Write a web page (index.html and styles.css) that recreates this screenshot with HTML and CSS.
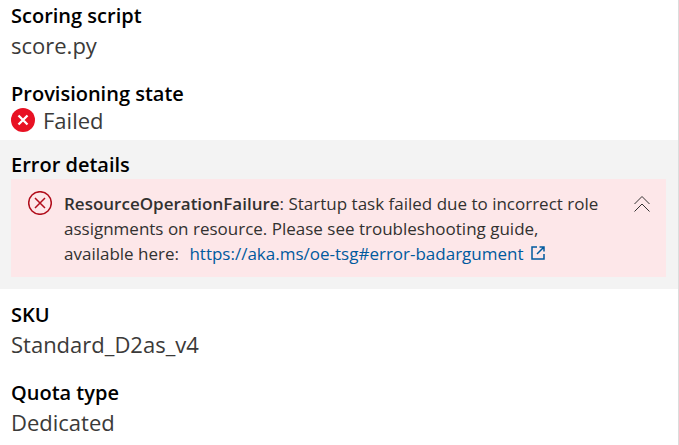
FILE: index.html
```html
<!DOCTYPE html>
<html lang="en">
<head>
<meta charset="utf-8">
<title>Deployment details</title>
<link rel="stylesheet" href="styles.css">
</head>
<body>
<main class="panel">
  <dl class="details">
    <div class="item">
      <dt class="label">Scoring script</dt>
      <dd class="value">score.py</dd>
    </div>
    <div class="item item-status">
      <dt class="label">Provisioning state</dt>
      <dd class="value status">
        <svg class="status-icon" viewBox="0 0 24 24" aria-hidden="true"><circle cx="12" cy="12" r="12" fill="#e81123"/><path d="M7.500 7.500l9 9M16.500 7.500l-9 9" stroke="#fff" stroke-width="2.300"/></svg>
        Failed
      </dd>
    </div>
    <div class="item item-error">
      <dt class="label">Error details</dt>
      <dd class="message">
        <svg class="message-icon" viewBox="0 0 24 24" aria-hidden="true"><circle cx="12" cy="12" r="11.300"/><path d="M7 7l10 10M17 7L7 17"/></svg>
        <p class="message-text"><strong>ResourceOperationFailure</strong>: Startup task failed due to incorrect role assignments on resource. Please see troubleshooting guide, available here: <a class="link" href="https://aka.ms/oe-tsg#error-badargument">https://aka.ms/oe-tsg#error-badargument<svg class="link-icon" viewBox="0 0 14 14" aria-hidden="true"><path d="M6 1H1v12h12V8M8.500 1H13v4.500M13 1L6 8"/></svg></a></p>
        <button class="collapse" type="button" aria-label="Collapse message"><svg class="collapse-icon" viewBox="0 0 16 16" aria-hidden="true"><path d="M.5 8L8 .5 15.500 8M.5 15.500L8 8l7.500 7.500"/></svg></button>
      </dd>
    </div>
    <div class="item">
      <dt class="label">SKU</dt>
      <dd class="value">Standard_D2as_v4</dd>
    </div>
    <div class="item">
      <dt class="label">Quota type</dt>
      <dd class="value">Dedicated</dd>
    </div>
  </dl>
</main>
</body>
</html>
```

FILE: styles.css
```css
* {
  box-sizing: border-box;
}

body {
  margin: 0;
  background: #fff;
  color: #323130;
  font-family: "Segoe UI", "Open Sans", "Noto Sans", sans-serif;
}

.panel {
  min-height: 100vh;
  padding-top: 1px;
  border-right: 1px solid #dcdcdc;
}

.details {
  margin: 0;
}

.item {
  padding: 0 12px 19px 11px;
}

.item:last-child {
  padding-bottom: 0;
}

.label {
  color: #000;
  font-size: 20px;
  font-weight: 600;
  line-height: 29px;
}

.value {
  margin: 0;
  color: #3b3a39;
  font-size: 22px;
  line-height: 30px;
}

.item-status {
  padding-bottom: 8px;
}

.status {
  display: flex;
  align-items: center;
  gap: 8px;
  line-height: 24px;
}

.status-icon {
  width: 24px;
  height: 24px;
}

.item-error {
  margin-bottom: 11px;
  padding-top: 10px;
  padding-bottom: 12px;
  background: #f3f3f3;
}

.message {
  display: flex;
  align-items: flex-start;
  gap: 12px;
  margin: 0;
  padding: 12px 16px 11px 17px;
  background: #fde7e9;
}

.message-icon {
  flex: none;
  width: 24px;
  height: 24px;
  fill: none;
  stroke: #b10e1c;
  stroke-width: 1.5;
}

.message-text {
  flex: 1;
  margin: 0;
  padding-right: 16px;
  font-size: 17px;
  line-height: 25px;
}

.message-text strong {
  font-weight: 600;
}

.link {
  margin-left: 6px;
  color: #005a9e;
  text-decoration: none;
}

.link-icon {
  width: 14px;
  height: 14px;
  margin-left: 7px;
  fill: none;
  stroke: currentColor;
  stroke-width: 1.5;
}

.collapse {
  flex: none;
  display: flex;
  margin: 5px 0 0;
  padding: 0;
  border: 0;
  background: none;
  color: #323130;
  cursor: pointer;
}

.collapse-icon {
  width: 16px;
  height: 16px;
  fill: none;
  stroke: currentColor;
}
```
